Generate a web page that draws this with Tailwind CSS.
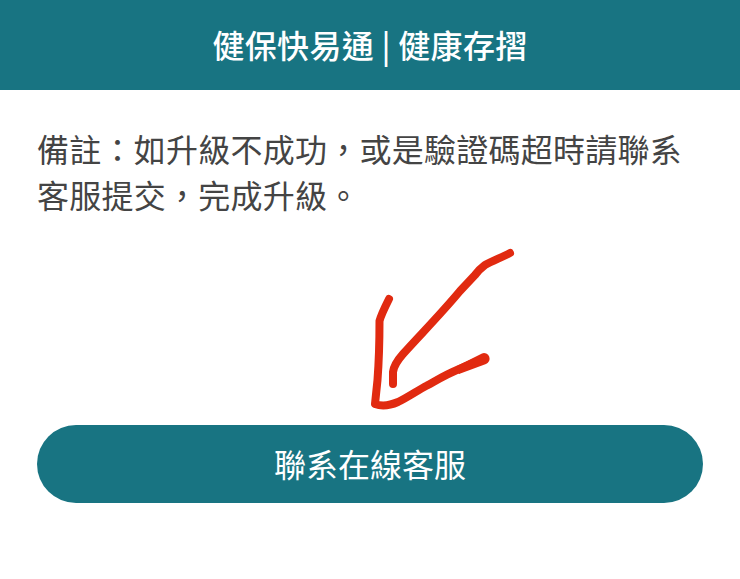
<!DOCTYPE html>
<html lang="zh-Hant">
<head>
<meta charset="UTF-8">
<title>健保快易通</title>
<script src="https://cdn.jsdelivr.net/npm/@tailwindcss/browser@4"></script>
</head>
<body class="bg-white font-['Noto_Sans_CJK_TC',sans-serif]">
<div class="relative h-[579px] w-[740px] overflow-hidden">
  <header class="flex h-[90px] items-center justify-center bg-[#187482] pb-[2px] text-[32px] font-medium tracking-[0.3px] text-white">健保快易通 | 健康存摺</header>
  <p class="px-[37px] pt-[35px] text-[32px] leading-[46px] tracking-[0.25px] text-[#444]">備註：如升級不成功，或是驗證碼超時請聯系客服提交，完成升級。</p>
  <svg class="absolute left-0 top-0" width="740" height="579" fill="none" stroke="#e12a10" stroke-width="8" stroke-linecap="round" stroke-linejoin="round">
    <path d="M510 253 C500 258 492 261 485 265 C481 268 478 271 475 275 L460 291 C440 315 420 335 403 354 C396 362 393.500 367 393 372 L393 384"/>
    <path d="M389 299 C385 307 381 315 379.500 321 C379.500 340 379 360 377.500 380 L375 404 C383 407 391 405 398 402 C410 396 418 390 427 385.500 C437 380 447 374 457 370 C466 366 475 362 484 358.500"/>
    <path d="M455 367 L482 353.500 A5.500 5.500 0 0 1 486 364 L459 374 Z" fill="#e12a10" stroke="none"/>
  </svg>
  <div class="absolute left-[37px] top-[425px] flex h-[78px] w-[666px] items-center justify-center rounded-full bg-[#187482] pb-[2px] text-[32px] text-white">聯系在線客服</div>
</div>
</body>
</html>
